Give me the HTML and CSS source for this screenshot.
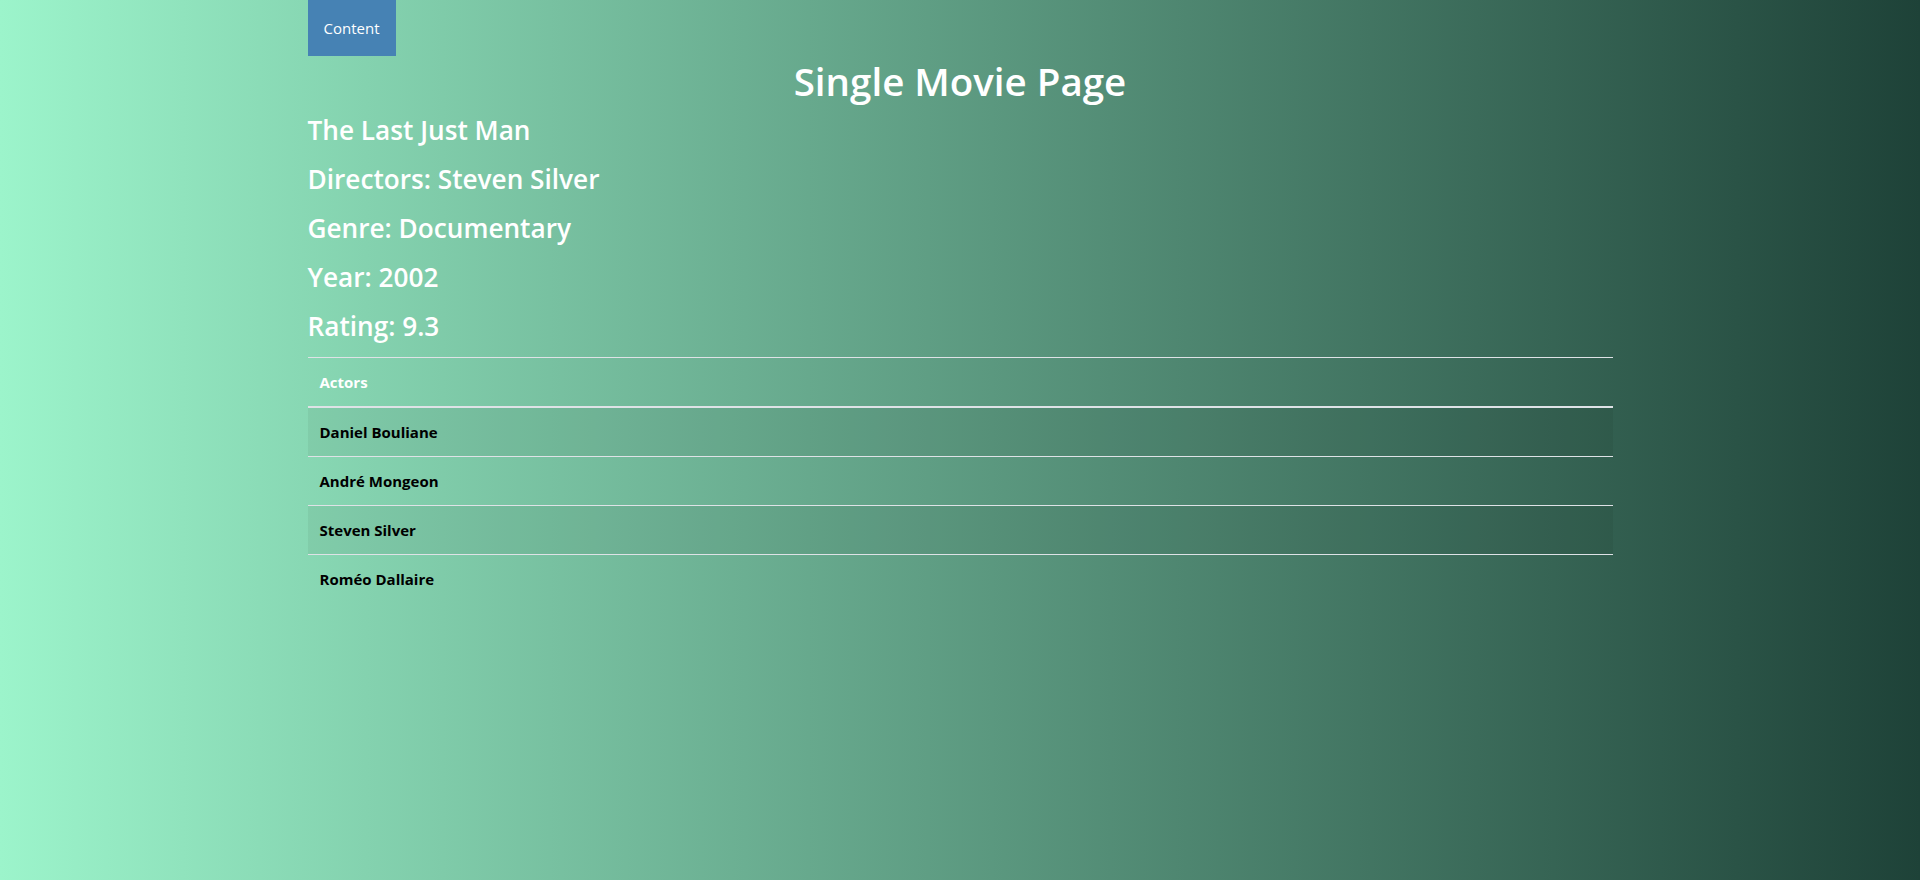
FILE: index.html
```html
<!DOCTYPE html>
<html lang="en">
<head>
<meta charset="utf-8">
<title>Single Movie Page</title>
<link rel="stylesheet" href="styles.css">
</head>
<body>
<div class="container">
  <nav class="nav">
    <a class="nav-link" href="#">Content</a>
  </nav>
  <h1 class="page-title">Single Movie Page</h1>
  <h3 class="info">The Last Just Man</h3>
  <h3 class="info">Directors: Steven Silver</h3>
  <h3 class="info">Genre: Documentary</h3>
  <h3 class="info">Year: 2002</h3>
  <h3 class="info">Rating: 9.3</h3>
  <table class="actors">
    <thead>
      <tr><th>Actors</th></tr>
    </thead>
    <tbody>
      <tr class="striped"><td>Daniel Bouliane</td></tr>
      <tr><td>André Mongeon</td></tr>
      <tr class="striped"><td>Steven Silver</td></tr>
      <tr><td>Roméo Dallaire</td></tr>
    </tbody>
  </table>
</div>
</body>
</html>
```

FILE: styles.css
```css
html, body {
  margin: 0;
  padding: 0;
}
body {
  min-height: 100vh;
  background: linear-gradient(to right, #9cf4cb, #1e4238);
  font-family: "Open Sans", "Noto Sans", sans-serif;
  color: #fff;
}
.container {
  width: 1305px;
  margin: 0 auto;
}
.nav {
  display: flex;
}
.nav-link {
  display: flex;
  align-items: center;
  height: 56px;
  padding: 0 16px;
  background: #4682b4;
  color: #fff;
  text-decoration: none;
  font-size: 15px;
}
.page-title {
  margin: 0;
  text-align: center;
  font-size: 38.5px;
  font-weight: 600;
  line-height: 49px;
  padding-top: 1px;
}
.info {
  margin: 0;
  font-size: 26.2px;
  font-weight: 600;
  line-height: 49px;
}
.actors {
  width: 100%;
  border-collapse: collapse;
  margin-top: 6px;
  font-size: 15px;
  line-height: 24px;
}
.actors th,
.actors td {
  text-align: left;
  padding: 12px;
  border-top: 1px solid #dee2e6;
  font-weight: 700;
}
.actors th {
  color: #fff;
  border-bottom: 2px solid #dee2e6;
}
.actors td {
  color: #000;
}
.actors tbody tr:first-child td {
  border-top: 0;
}
.striped {
  background: rgba(0, 0, 0, 0.05);
}
```
